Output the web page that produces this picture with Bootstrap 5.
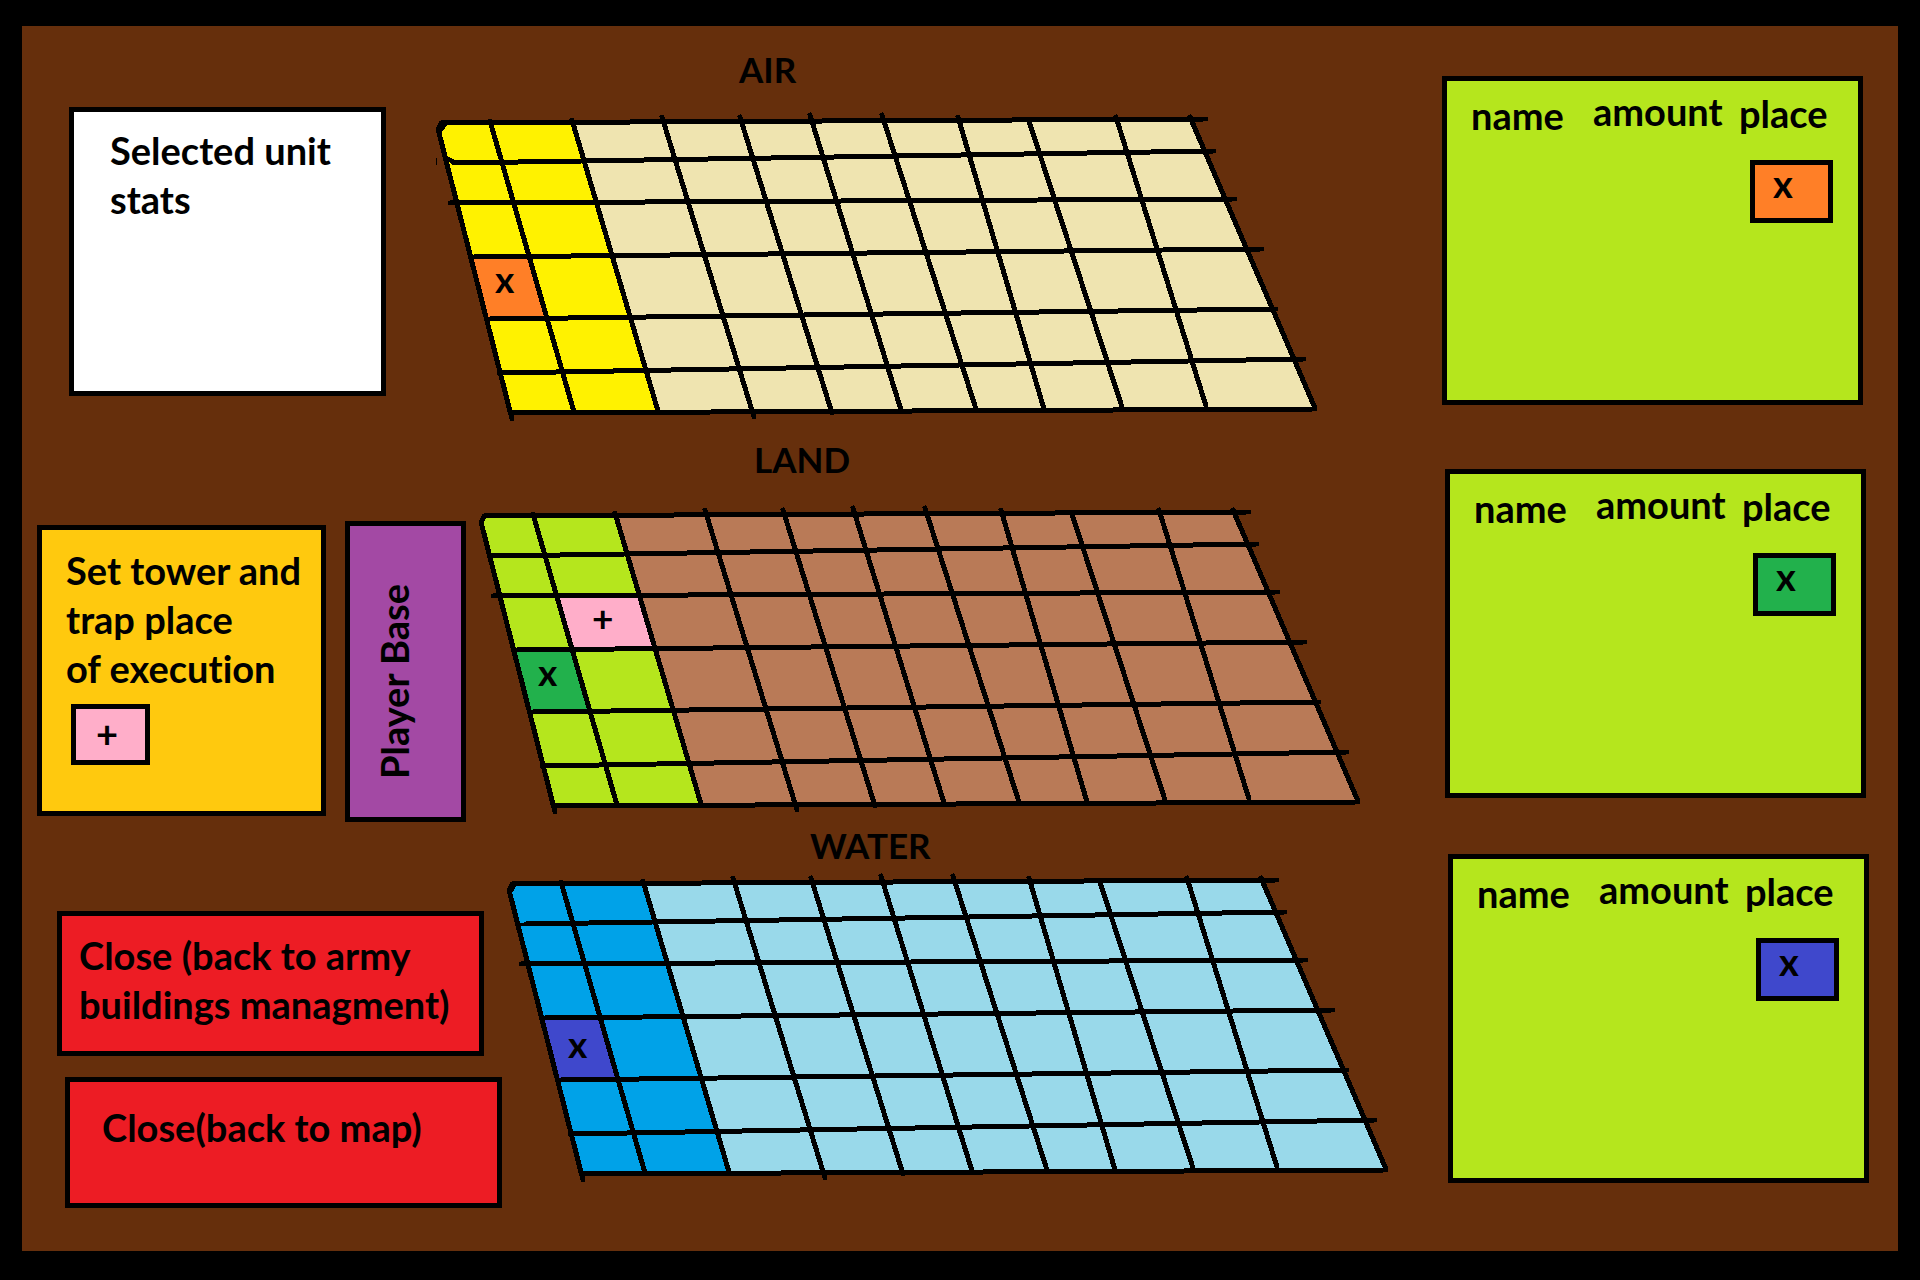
<!DOCTYPE html>
<html lang="en">
<head>
<meta charset="utf-8">
<meta name="viewport" content="width=device-width, initial-scale=1">
<title>Unit placement</title>
<link href="https://cdn.jsdelivr.net/npm/bootstrap@5.3.0/dist/css/bootstrap.min.css" rel="stylesheet">
<style>
  body { font-family: Lato, "Open Sans", sans-serif; font-size: 38px; font-weight: 700; line-height: 49px; font-variant-ligatures: none; color: #000; background: #000; }
  .game-screen { min-height: 100vh; background: #662f0c; border: solid #000; border-width: 26px 22px 29px; }
  .box { border: 5px solid #000; border-radius: 0; color: #000; font: inherit; flex: none; }
  .box-stats { background: #fff; width: 317px; min-height: 289px; margin: 81px 0 0 47px; padding: 14px 36px; }
  .box-tower { background: #ffc90e; width: 289px; min-height: 291px; margin: 97px 0 0 15px; padding: 16px 0 0 24px; }
  .box-base { background: #a349a4; width: 121px; min-height: 301px; margin: 93px 0 0 19px; padding: 0 0 38px 20px; }
  .base-label { writing-mode: vertical-rl; transform: rotate(180deg); }
  .box-close { background: #ed1c24; text-align: left; }
  .box-close:hover { background: #d8141c; }
  .close-army { width: 427px; min-height: 145px; margin: 89px 0 0 35px; padding: 15px 0 0 17px; }
  .close-map { width: 437px; min-height: 131px; margin: 21px 0 0 43px; padding: 21px 0 0 32px; }

  .board { flex: 0 1 884px; min-width: 0; }
  .board h2 { font: inherit; font-size: 35px; line-height: 48px; margin: 0; }
  .board svg { display: block; width: 100%; height: auto; shape-rendering: crispEdges; font-size: 37px; }
  .board-air { margin: 19px 0 0 49px; } .board-air h2 { padding-left: 304px; margin-bottom: 19px; }
  .board-land { margin: 7px 0 0 12px; } .board-land h2 { padding-left: 276px; margin-bottom: 22px; }
  .board-water { margin-left: 4px; } .board-water h2 { padding-left: 304px; line-height: 46px; margin-bottom: 5px; }
  .sector-land { margin-top: 4px; }
  .grid-lines { fill: none; stroke: #000; stroke-width: 5; stroke-linecap: round; stroke-linejoin: round; }

  .roster { background: #b5e61d; width: 421px; min-height: 329px; padding-left: 24px; }
  .roster-air { margin: 50px 35px 0 0; }
  .roster-land { margin: 41px 32px 0 0; }
  .roster-water { margin: 32px 29px 0 0; }
  .roster table { table-layout: fixed; width: 100%; }
  .roster th, .roster td { padding: 0; vertical-align: top; }
  .roster thead tr { height: 79px; }
  .roster .col-unit { width: 122px; padding-top: 10px; }
  .roster .col-count { width: 146px; padding-top: 6px; }
  .roster .col-spot { padding-top: 8px; }
  .roster td .chip { margin-left: 11px; }

  .chip { width: 83px; height: 63px; padding: 0 0 0 18px; line-height: 37px; text-align: left; display: flex; }
  .chip-tower { background: #ffaec9; width: 79px; height: 61px; margin: 11px 0 0 5px; padding: 6px 0 0 20px; }
  .chip-air { background: #ff7f27; } .chip-land { background: #22b14c; } .chip-water { background: #3f48cc; }
</style>
</head>
<body>
<main class="game-screen">

  <section class="d-flex align-items-start">
    <div class="box box-stats">Selected unit stats</div>
    <div class="board board-air">
      <h2>AIR</h2>
      <svg viewBox="435 112 884 312" role="img" aria-label="Air grid">
        <defs>
          <g id="grid" class="grid-lines">
            <path d="M441 123L1206 119M455 163L1214 151M450 203L1235 199M474 257L1262 249M490 319L1276 309M499 373L1304 359M512 413L1315 409"/>
            <path d="M441 124L438 129L512 419M490 121L574 412M572 120L658 411M662 117L754 417M740 117L832 413M810 115L901 410M882 115L976 409M958 117L1044 409M1029 121L1122 407M1116 117L1206 406M1190 117L1315 408"/>
          </g>
        </defs>
        <path fill="#efe4b0" d="M572 122L1190 119L1315 409L658 412Z"/>
        <path fill="#fff200" d="M441 123L572 122L658 412L512 413L440 132Z"/>
        <path fill="#ff7f27" d="M471 257L529 256L546 318L487 319Z"/>
        <use href="#grid"/>
        <path d="M436 158V165" stroke="#000"/>
        <path d="M439 124H448L442 132L441 137L438 133ZM444 154L458 162L452 165Z"/>
        <text x="495" y="293">x</text>
      </svg>
    </div>
    <div class="box roster roster-air ms-auto">
      <table>
        <thead><tr><th class="col-unit">name</th><th class="col-count">amount</th><th class="col-spot">place</th></tr></thead>
        <tbody><tr><td></td><td></td><td><button type="button" class="box chip chip-air">x</button></td></tr></tbody>
      </table>
    </div>
  </section>

  <section class="d-flex align-items-start sector-land">
    <div class="box box-tower">
      Set tower and<br>trap place<br>of execution
      <button type="button" class="box chip chip-tower">+</button>
    </div>
    <div class="box box-base d-flex align-items-end"><span class="base-label">Player Base</span></div>
    <div class="board board-land">
      <h2>LAND</h2>
      <svg viewBox="435 112 884 312" role="img" aria-label="Land grid">
        <path fill="#b97a57" d="M572 122L1190 119L1315 409L658 412Z"/>
        <path fill="#b5e61d" d="M441 123L572 122L658 412L512 413L440 132Z"/>
        <path fill="#22b14c" d="M471 257L529 256L546 318L487 319Z"/>
        <path fill="#ffaec9" d="M513 203L596 202L612 256L529 256Z"/>
        <use href="#grid"/>
        <path d="M448 163L460 162" stroke="#000" stroke-width="5"/>
        <text x="495" y="293">x</text>
        <text x="549" y="239">+</text>
      </svg>
    </div>
    <div class="box roster roster-land ms-auto">
      <table>
        <thead><tr><th class="col-unit">name</th><th class="col-count">amount</th><th class="col-spot">place</th></tr></thead>
        <tbody><tr><td></td><td></td><td><button type="button" class="box chip chip-land">x</button></td></tr></tbody>
      </table>
    </div>
  </section>

  <section class="d-flex align-items-start">
    <div class="d-flex flex-column align-items-start flex-shrink-0">
      <button type="button" class="box box-close close-army d-flex align-items-start">Close (back to army<br>buildings managment)</button>
      <button type="button" class="box box-close close-map d-flex align-items-start">Close(back to map)</button>
    </div>
    <div class="board board-water">
      <h2>WATER</h2>
      <svg viewBox="435 112 884 312" role="img" aria-label="Water grid">
        <path fill="#99d9ea" d="M572 122L1190 119L1315 409L658 412Z"/>
        <path fill="#00a2e8" d="M441 123L572 122L658 412L512 413L440 132Z"/>
        <path fill="#3f48cc" d="M471 257L529 256L546 318L487 319Z"/>
        <use href="#grid"/>
        <path d="M448 162H457V165H450ZM439 124H446L441 132Z"/>
        <text x="497" y="297">x</text>
      </svg>
    </div>
    <div class="box roster roster-water ms-auto">
      <table>
        <thead><tr><th class="col-unit">name</th><th class="col-count">amount</th><th class="col-spot">place</th></tr></thead>
        <tbody><tr><td></td><td></td><td><button type="button" class="box chip chip-water">x</button></td></tr></tbody>
      </table>
    </div>
  </section>

</main>
<script src="https://cdn.jsdelivr.net/npm/bootstrap@5.3.0/dist/js/bootstrap.bundle.min.js"></script>
</body>
</html>
